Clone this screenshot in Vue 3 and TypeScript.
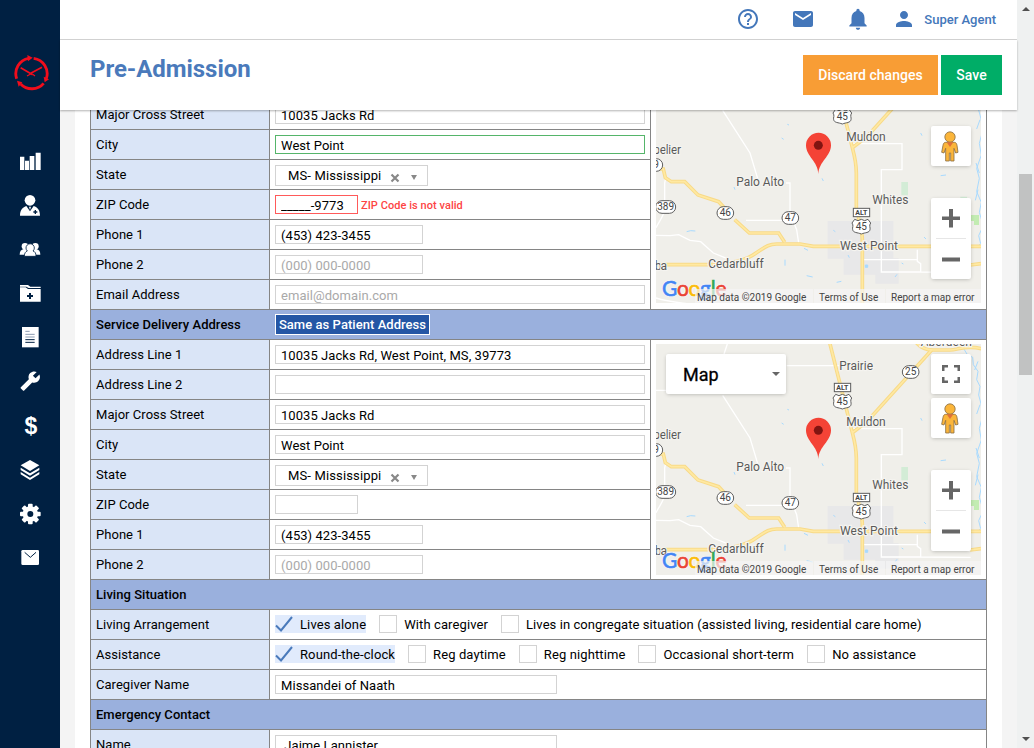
<script setup lang="ts">
interface Choice {
  text: string
  on?: boolean
  long?: boolean
}
interface Row {
  label: string
  kind: 'text' | 'select' | 'checks'
  value?: string
  hint?: string
  size?: 'full' | 'half' | 'phone' | 'zip'
  state?: 'valid' | 'invalid'
  error?: string
  choices?: Choice[]
}
interface Section {
  title?: string
  action?: string
  map?: 'partial' | 'whole'
  rows: Row[]
}

const sections: Section[] = [
  {
    map: 'partial',
    rows: [
      { label: 'Major Cross Street', kind: 'text', value: '10035 Jacks Rd', size: 'full' },
      { label: 'City', kind: 'text', value: 'West Point', size: 'full', state: 'valid' },
      { label: 'State', kind: 'select', value: 'MS- Mississippi' },
      { label: 'ZIP Code', kind: 'text', value: '_____-9773', size: 'zip', state: 'invalid', error: 'ZIP Code is not valid' },
      { label: 'Phone 1', kind: 'text', value: '(453) 423-3455', size: 'phone' },
      { label: 'Phone 2', kind: 'text', hint: '(000) 000-0000', size: 'phone' },
      { label: 'Email Address', kind: 'text', hint: 'email@domain.com', size: 'full' },
    ],
  },
  {
    title: 'Service Delivery Address',
    action: 'Same as Patient Address',
    map: 'whole',
    rows: [
      { label: 'Address Line 1', kind: 'text', value: '10035 Jacks Rd, West Point, MS, 39773', size: 'full' },
      { label: 'Address Line 2', kind: 'text', size: 'full' },
      { label: 'Major Cross Street', kind: 'text', value: '10035 Jacks Rd', size: 'full' },
      { label: 'City', kind: 'text', value: 'West Point', size: 'full' },
      { label: 'State', kind: 'select', value: 'MS- Mississippi' },
      { label: 'ZIP Code', kind: 'text', size: 'zip' },
      { label: 'Phone 1', kind: 'text', value: '(453) 423-3455', size: 'phone' },
      { label: 'Phone 2', kind: 'text', hint: '(000) 000-0000', size: 'phone' },
    ],
  },
  {
    title: 'Living Situation',
    rows: [
      {
        label: 'Living Arrangement',
        kind: 'checks',
        choices: [
          { text: 'Lives alone', on: true },
          { text: 'With caregiver' },
          { text: 'Lives in congregate situation (assisted living, residential care home)', long: true },
        ],
      },
      {
        label: 'Assistance',
        kind: 'checks',
        choices: [
          { text: 'Round-the-clock', on: true },
          { text: 'Reg daytime' },
          { text: 'Reg nighttime' },
          { text: 'Occasional short-term' },
          { text: 'No assistance' },
        ],
      },
      { label: 'Caregiver Name', kind: 'text', value: 'Missandei of Naath', size: 'half' },
    ],
  },
  {
    title: 'Emergency Contact',
    rows: [{ label: 'Name', kind: 'text', value: ' Jaime Lannister', size: 'half' }],
  },
]

// Map drawing units are a third of a pixel.
const viewBoxes = { partial: '18 141 975 609', whole: '18 18 975 693' }

const teeth = [0, 45, 90, 135, 180, 225, 270, 315]

const places = [
  { t: 'Prairie', x: 568, y: 97, w: 101 },
  { t: 'Muldon', x: 589, y: 265, w: 118 },
  { t: 'Palo Alto', x: 259, y: 400, w: 143 },
  { t: 'Whites', x: 667, y: 454, w: 108 },
  { t: 'West Point', x: 570, y: 592, w: 174 },
  { t: 'Cedarbluff', x: 175, y: 646, w: 166 },
  { t: 'pelier', x: 10, y: 304, w: 83 },
  { t: 'ba', x: 14, y: 652, w: 37 },
  { t: 'Aberdeen', x: 812, y: 24, w: 154 },
]
const ovals = [
  { t: '25', x: 782, y: 102, w: 50 },
  { t: '46', x: 226, y: 480, w: 50 },
  { t: '47', x: 421, y: 495, w: 50 },
  { t: '389', x: 47, y: 462, w: 60 },
  { t: '9', x: 18, y: 336, w: 40 },
]
const shields = [
  { x: 577, y: 190 },
  { x: 634, y: 520 },
]
</script>

<template>
  <div class="app">
    <aside class="side">
      <svg class="logo" viewBox="42 165 108 108" fill="none" stroke="#f10d1c">
        <g stroke-width="8.500">
          <path d="M101 175A46.500 46.500 0 0 1 139 236" />
          <path d="M131 250A46.500 46.500 0 0 1 62 252" />
          <path d="M50 236A46.500 46.500 0 0 1 86 175" />
        </g>
        <g fill="#f10d1c" stroke="none">
          <path d="M82 165l16 8-14 11z" />
          <path d="M147 238l-13 9-3-17z" />
          <path d="M51 242l16 5-11 13z" />
        </g>
        <path d="M62 203L98 224M126 202L88 222" stroke-width="5" />
        <path d="M98 223l7 5M92 222l-11 6" stroke-width="3.500" />
      </svg>
      <nav class="nav">
        <a><svg viewBox="0 0 66 66"><path d="M3 20h13v40H3zM18 32h12v28H18zM32 18h14v42H32zM50 8h15v52H50z" /></svg></a>
        <a>
          <svg viewBox="0 0 66 66">
            <circle cx="33" cy="19" r="16" />
            <path d="M3 65C3 47 12 40 22 36L33 52 44 36C56 40 63 48 63 65z" />
            <path d="M30 38h6l-3 10z" />
            <path class="cut" d="M47 48h4v4h4v4h-4v4h-4v-4h-4v-4h4z" />
          </svg>
        </a>
        <a>
          <svg viewBox="0 0 66 66">
            <circle cx="18" cy="25" r="10" /><circle cx="49" cy="25" r="10" />
            <path d="M2 50c0-10 4-15 12-17h38c8 2 12 7 12 17z" />
            <path class="cutline" d="M16 55c0-10 4-14 9-16a12.500 12.500 0 1 1 17 0c6 2 9 6 9 16z" />
          </svg>
        </a>
        <a class="low">
          <svg viewBox="0 0 66 66">
            <path d="M3 6h24l7 5h31v4H29l-7-4H3zM3 13h17l7 5h38v38H3z" />
            <path class="cut" d="M30 30h6v6h6v6h-6v6h-6v-6h-6v-6h6z" />
          </svg>
        </a>
        <a>
          <svg viewBox="0 0 66 66">
            <path d="M9 3h50v61H9z" />
            <path d="M19 16h13M19 25h28M19 33h28" stroke="#8c9bb0" stroke-width="3" />
            <path d="M19 41h28M19 49h28" stroke="#002042" stroke-width="3" />
          </svg>
        </a>
        <a>
          <svg viewBox="-.5 -.5 25 25">
            <path transform="matrix(-1 0 0 1 24.3 0)" d="M22.700 19l-9.100-9.100c.9-2.300.4-5-1.500-6.900-2-2-5-2.400-7.400-1.300L9 6 6 9 1.600 4.700C.4 7.100.9 10.100 2.900 12.100c1.900 1.900 4.600 2.400 6.900 1.500l9.100 9.100c.4.4 1 .4 1.400 0l2.300-2.300c.5-.4.5-1.100.1-1.400z" />
          </svg>
        </a>
        <a class="low"><span class="dollar">$</span></a>
        <a class="low">
          <svg viewBox="0 0 66 66">
            <path d="M33 3L61 19 33 36 5 19z" />
            <path d="M5 26L33 43 61 26v7L33 50 5 33z" />
            <path d="M5 39L33 56 61 39v7L33 63 5 46z" />
          </svg>
        </a>
        <a class="low">
          <svg viewBox="0 0 66 66">
            <circle cx="34" cy="33" r="23" />
            <rect v-for="a in teeth" :key="a" x="27" y="2" width="14" height="14" rx="3" :transform="`rotate(${a} 34 33)`" />
            <circle class="cut" cx="34" cy="33" r="9" />
          </svg>
        </a>
        <a>
          <svg viewBox="0 0 66 66">
            <rect x="7" y="12" width="53" height="45" rx="4" />
            <path d="M17 19L34 34 51 19" fill="none" stroke="#002042" stroke-width="3" />
          </svg>
        </a>
      </nav>
    </aside>

    <div class="page">
      <header class="topbar">
        <svg class="ico help" viewBox="0 0 24 24"><path d="M11 18h2v-2h-2v2zm1-16C6.480 2 2 6.480 2 12s4.480 10 10 10 10-4.480 10-10S17.520 2 12 2zm0 18c-4.410 0-8-3.590-8-8s3.590-8 8-8 8 3.590 8 8-3.590 8-8 8zm0-14c-2.210 0-4 1.790-4 4h2c0-1.100.9-2 2-2s2 .9 2 2c0 2-3 1.750-3 5h2c0-2.250 3-2.500 3-5 0-2.210-1.790-4-4-4z" /></svg>
        <svg class="ico mail" viewBox="0 0 24 24"><path d="M20 4H4c-1.100 0-2 .9-2 2v12c0 1.100.9 2 2 2h16c1.100 0 2-.9 2-2V6c0-1.100-.9-2-2-2zm0 4l-8 5-8-5V6l8 5 8-5v2z" /></svg>
        <svg class="ico bell" viewBox="0 0 24 24"><path d="M12 22c1.100 0 2-.9 2-2h-4c0 1.100.89 2 2 2zm6-6v-5c0-3.070-1.640-5.640-4.500-6.320V4c0-.83-.67-1.500-1.500-1.500s-1.500.67-1.500 1.500v.68C7.630 5.360 6 7.920 6 11v5l-2 2v1h16v-1l-2-2z" /></svg>
        <svg class="ico user" viewBox="0 0 24 24"><path d="M12 12c2.210 0 4-1.790 4-4s-1.790-4-4-4-4 1.790-4 4 1.790 4 4 4zm0 2c-2.670 0-8 1.340-8 4v2h16v-2c0-2.660-5.330-4-8-4z" /></svg>
        <span class="agent">Super Agent</span>
      </header>
      <div class="titlebar">
        <h1>Pre-Admission</h1>
        <button class="btn discard">Discard changes</button>
        <button class="btn save">Save</button>
      </div>

      <div class="body">
        <main class="panel">
          <section v-for="(s, i) in sections" :key="i">
            <div v-if="s.title" class="head">
              <span class="head-title">{{ s.title }}</span>
              <button v-if="s.action" class="same">{{ s.action }}</button>
            </div>
            <div class="group">
              <div class="rows">
                <div v-for="(r, j) in s.rows" :key="j" class="row">
                  <div class="label">{{ r.label }}</div>
                  <div class="field">
                    <template v-if="r.kind === 'text'">
                      <input type="text" class="input" :class="[r.size, r.state]" :value="r.value" :placeholder="r.hint" />
                      <span v-if="r.error" class="error">{{ r.error }}</span>
                    </template>
                    <div v-else-if="r.kind === 'select'" class="select">
                      <span>{{ r.value }}</span>
                      <svg class="x" viewBox="0 0 10 10"><path d="M1.500 1.500l7 7M8.500 1.500l-7 7" /></svg>
                      <i class="caret"></i>
                    </div>
                    <template v-else>
                      <label v-for="c in r.choices" :key="c.text" class="check" :class="{ on: c.on, long: c.long }">
                        <svg v-if="c.on" viewBox="0 0 18 18"><path d="M1 10.500l5 5L17 2" /></svg>
                        <i v-else class="box"></i>
                        <span>{{ c.text }}</span>
                      </label>
                    </template>
                  </div>
                </div>
              </div>
              <div v-if="s.map" class="mapcell" :class="s.map">
                <div class="map">
                  <svg class="canvas" :viewBox="viewBoxes[s.map]">
                    <rect x="0" y="0" width="1010" height="760" fill="#f0efea" />
                    <path d="M533 504h197v112h16v76h-70v-27h-95v-48h-48z" fill="#e8e8e9" />
                    <path d="M754 387h20v40h-20zM931 431h20v8h-20z" fill="#d3ecd6" />
                    <path d="M963 486h24v30h-15v-12h-9z" fill="#c3ecb2" />
                    <g class="water">
                      <path d="M940 30l12 20 16 8 2 22 14 20-4 25 10 20-4 26 8 30 2 40-8 30 6 35-14 40 8 30-8 40 14 32-6 30 12 40-14 30 6 24-12 12" />
                      <path d="M984 70l-10 26M990 200l-10 28M978 330l10 30M984 410l-8 32" />
                      <path d="M395 255l6 4M412 214l5 2M516 376l4 8M252 402l3 8M812 240l4 8M872 368l16-2M110 536l12-3 14 1M405 620v18M594 606l4 8M550 532l6 4M735 672l6-8M560 688l14-3M470 668l18 4M755 630l5 3M822 552l6 6M622 490l5 6M462 586l12 6" />
                      <path d="M646 636h7v7h-7z" fill="#a8daff" />
                    </g>
                    <g class="minor">
                      <path d="M232 18L222 48 M218 172L300 300 324 380 M410 83H568 M18 157H50 M610 272H756V350H694V657H812 M408 390H420V480L440 530 446 570 M288 502H400 M640 620H802V625L812 632V657L962 658 M18 547L60 548 86 545 120 562 152 566 190 600 230 616 M18 524C30 500 40 492 44 470V390L48 370 M18 735C50 745 80 748 110 752 M802 620V590" />
                    </g>
                    <g v-for="k in ['casing', 'road']" :key="k" :class="k">
                      <path d="M18 348H40L46 374 64 386H104L144 426 206 446 224 466 M254 500L298 540H386L404 568" />
                      <path d="M18 635H180C230 635 290 622 318 600 350 578 360 573 380 573H450L490 580H993" />
                      <path d="M538 10L607 284C614 310 619 330 619 360V465C626 500 637 530 637 560V760M607 284L650 252 845 36" />
                      <path d="M800 15C815 32 830 36 850 36H900C925 36 945 20 995 32M960 636L993 632" />
                    </g>
                    <g v-for="o in ovals" :key="o.t">
                      <rect class="oval" :x="o.x - o.w / 2" :y="o.y - 19" :width="o.w" height="38" rx="19" />
                      <text class="num" :x="o.x" :y="o.y + 10">{{ o.t }}</text>
                    </g>
                    <g v-for="h in shields" :key="h.x" :transform="`translate(${h.x} ${h.y})`">
                      <rect class="alt" x="-24" y="-54" width="49" height="25" />
                      <text class="altnum" x="0" y="-34">ALT</text>
                      <path class="oval" d="M-20-21L-10-17 0-21 10-17 20-21 28-10C22-2 28 4 26 10 24 20 12 18 0 23-12 18-24 20-26 10-28 4-22-2-28-10z" />
                      <text class="num" x="0" y="12">45</text>
                    </g>
                    <text v-for="p in places" :key="p.t" class="place" :x="p.x" :y="p.y" :textLength="p.w">{{ p.t }}</text>
                    <path d="M505 363C504 325 468 310 468 277A37.500 37.500 0 0 1 543 277C543 310 507 325 505 363z" fill="#f44336" />
                    <circle cx="505" cy="277" r="13.500" fill="#811411" />
                  </svg>
                  <div class="google"><b>G</b><i>o</i><u>o</u><b>g</b><s>l</s><i>e</i></div>
                  <div class="credits">
                    <span class="c1">Map data ©2019 Google</span><span class="c2">Terms of Use</span><span class="c3">Report a map error</span>
                  </div>
                  <div v-if="s.map === 'whole'" class="maptype">Map<i></i></div>
                  <div v-if="s.map === 'whole'" class="ctl full-screen">
                    <svg viewBox="0 0 18 18"><path d="M0 0h6v2.500H2.500V6H0zM12 0h6v6h-2.500V2.500H12zM0 12h2.500v3.500H6V18H0zM15.500 12H18v6h-6v-2.500h3.500z" /></svg>
                  </div>
                  <div class="ctl pegman">
                    <svg viewBox="0 0 54 93">
                      <g fill="#fbb53a" stroke="#8b7044" stroke-width="2.500">
                        <path d="M14 34h26c5 0 7 4 8 9l3 21-7 2-5-14v38H29V66h-4v24H14V52L9 66l-7-2 4-21c1-5 3-9 8-9z" />
                        <circle cx="27" cy="18" r="15.500" />
                      </g>
                      <path d="M17 34h20L27 48z" fill="#e0703a" />
                    </svg>
                  </div>
                  <div class="zoomer">
                    <svg viewBox="0 0 40 81">
                      <path d="M11 18.500h7v-7.500h4v7.500h7v3.500h-7v7.500h-4V22H11zM11 59.500h18V63.500H11z" fill="#666" />
                      <path d="M5 40.500h30" stroke="#e6e6e6" />
                    </svg>
                  </div>
                </div>
              </div>
            </div>
          </section>
        </main>
      </div>
    </div>

    <div class="scrollbar">
      <i class="up"></i>
      <i class="thumb"></i>
      <i class="down"></i>
    </div>
  </div>
</template>

<style>
body {
  margin: 0;
  overflow: hidden;
}
</style>

<style scoped>
.app {
  display: flex;
  width: 1034px;
  height: 748px;
  overflow: hidden;
  background: #f4f4f4;
  font: 13px/1 Roboto, "Liberation Sans", sans-serif;
  color: #000;
}
.side {
  width: 60px;
  flex: none;
  background: #002042;
  box-sizing: border-box;
  padding-top: 55px;
}
.logo {
  display: block;
  width: 36px;
  height: 36px;
  margin: 0 0 48px 14px;
}
.nav {
  display: flex;
  flex-direction: column;
}
.nav a {
  height: 44px;
  box-sizing: border-box;
  display: flex;
  align-items: center;
  justify-content: center;
  color: #fff;
}
.nav .low {
  padding-top: 2px;
}
.nav svg {
  width: 22px;
  height: 22px;
  fill: #fff;
}
.nav .cut {
  fill: #002042;
}
.nav .cutline {
  stroke: #002042;
  stroke-width: 2.5;
}
.dollar {
  font: bold 23px/24px "Liberation Sans", Arial, sans-serif;
  padding-left: 2px;
}
.page {
  flex: 1;
  display: flex;
  flex-direction: column;
  min-width: 0;
}
.topbar {
  height: 39px;
  flex: none;
  display: flex;
  align-items: center;
  justify-content: flex-end;
  padding-right: 21px;
  background: #fff;
  border-bottom: 1px solid #d6d6d6;
}
.ico {
  width: 24px;
  height: 24px;
  margin-top: -1px;
  fill: #4477ba;
}
.help {
  margin-right: 31px;
}
.mail {
  margin-right: 30px;
}
.bell {
  width: 26px;
  height: 26px;
  margin-right: 21px;
}
.user {
  margin-right: 8px;
}
.agent {
  font-weight: 500;
  color: #4477ba;
}
.titlebar {
  position: relative;
  z-index: 1;
  height: 70px;
  flex: none;
  display: flex;
  align-items: center;
  gap: 3px;
  padding: 0 15px 0 30px;
  background: #fff;
  box-shadow: 0 1px 2px rgba(0, 0, 0, 0.3);
}
h1 {
  flex: 1;
  margin: 0 0 12px;
  font-size: 24px;
  line-height: 28px;
  font-weight: 700;
  letter-spacing: -0.05px;
  color: #4a7abb;
}
.btn {
  height: 40px;
  border: 0;
  padding: 0;
  font: 500 14px/40px Roboto, "Liberation Sans", sans-serif;
  letter-spacing: 0.03px;
  color: #fff;
}
.discard {
  width: 135px;
  background: #f89d35;
}
.save {
  width: 61px;
  background: #00ad67;
}
.body {
  flex: 1;
  min-height: 0;
  overflow: hidden;
  padding: 0 15px;
}
.panel {
  background: #fff;
  padding: 0 15px;
  margin-top: -10px;
}
section {
  border: solid #858585;
  border-width: 0 1px;
}
.head {
  height: 29px;
  display: flex;
  align-items: center;
  background: #9ab0dd;
  border-bottom: 1px solid #858585;
  font-weight: 500;
}
.head-title {
  width: 179px;
  padding-left: 5px;
  box-sizing: border-box;
  letter-spacing: 0.03px;
}
.same {
  width: 155px;
  height: 21px;
  margin-left: 5px;
  padding: 0;
  border: 1px solid #fff;
  background: #2456a5;
  color: #fff;
  font: 500 13px/19px Roboto, "Liberation Sans", sans-serif;
  letter-spacing: 0.05px;
}
.group {
  display: flex;
}
.rows {
  flex: 1;
}
.row {
  display: flex;
  height: 29px;
  border-bottom: 1px solid #858585;
}
.label {
  width: 179px;
  flex: none;
  box-sizing: border-box;
  padding-left: 5px;
  line-height: 29px;
  letter-spacing: 0.04px;
  background: #dae5f7;
  border-right: 1px solid #858585;
}
.field {
  flex: 1;
  display: flex;
  align-items: flex-start;
  padding: 5px 5px 0;
}
.input {
  box-sizing: border-box;
  height: 19px;
  margin: 0;
  border: 1px solid #d3d3d3;
  padding: 2px 0 0 5px;
  font: 13px/16px Roboto, "Liberation Sans", sans-serif;
  letter-spacing: 0.06px;
  color: #000;
  background: #fff;
  outline: 0;
  border-radius: 0;
}
.input::placeholder {
  color: #a9a9a9;
  opacity: 1;
}
.full {
  width: 370px;
}
.half {
  width: 282px;
}
.phone {
  width: 148px;
}
.zip {
  width: 83px;
}
.valid {
  border-color: #55b56a;
}
.invalid {
  border-color: #ff5a5a;
}
.error {
  margin: 0 0 0 3px;
  font-size: 11px;
  line-height: 22px;
  font-weight: 500;
  letter-spacing: 0.05px;
  color: #fd4444;
}
.select {
  box-sizing: border-box;
  width: 153px;
  height: 21px;
  border: 1px solid #d3d3d3;
  padding-left: 12px;
  display: flex;
  align-items: center;
}
.select span {
  width: 102px;
  line-height: 19px;
  letter-spacing: 0.14px;
}
.x {
  width: 10px;
  height: 10px;
  margin-top: 4px;
  stroke: #888;
  stroke-width: 2.2;
}
.caret {
  margin: 4px 0 0 11px;
  border: solid transparent;
  border-width: 5px 3.5px 0;
  border-top-color: #888;
}
.check {
  display: flex;
  align-items: center;
  height: 18px;
  margin-right: 13px;
  letter-spacing: 0.11px;
}
.check.long {
  letter-spacing: 0.07px;
}
.check.on {
  background: #e1ebfc;
}
.check svg,
.box {
  width: 18px;
  height: 18px;
  box-sizing: border-box;
  margin-right: 7px;
}
.check svg {
  fill: none;
  stroke: #4a7abb;
  stroke-width: 2;
}
.box {
  border: 1px solid #d3d3d3;
  background: #fff;
}
.mapcell {
  width: 336px;
  box-sizing: border-box;
  border: solid #858585;
  border-width: 0 0 1px 1px;
}
.whole {
  padding: 4px 5px;
}
.partial {
  padding: 0 5px;
}
.map {
  position: relative;
  overflow: hidden;
  width: 325px;
  height: 231px;
}
.partial .map {
  height: 203px;
}
.canvas {
  display: block;
  width: 325px;
  height: 100%;
}
.water {
  fill: none;
  stroke: #a8daff;
  stroke-width: 3;
}
.minor {
  fill: none;
  stroke: #fff;
  stroke-width: 4;
}
.casing {
  fill: none;
  stroke: #f8da88;
  stroke-width: 11;
}
.road {
  fill: none;
  stroke: #ffe9a2;
  stroke-width: 5;
}
.oval {
  fill: #fff;
  stroke: #5d5d5d;
  stroke-width: 3;
}
.alt {
  fill: #fff;
  stroke: #5d5d5d;
  stroke-width: 3;
}
.num {
  font-size: 30px;
  fill: #444;
  text-anchor: middle;
}
.altnum {
  font-size: 21px;
  font-weight: 700;
  fill: #444;
  text-anchor: middle;
}
.place {
  font-size: 36px;
  fill: #5a5a5a;
  stroke: #f5f4f0;
  stroke-width: 7;
  paint-order: stroke;
}
.google {
  position: absolute;
  left: 6px;
  bottom: 2px;
  height: 26px;
  font: 21px/26px Lato, "Liberation Sans", sans-serif;
  letter-spacing: -0.3px;
  text-shadow: 0 0 2px #fff, 0 0 2px #fff;
}
.google b,
.google i,
.google u,
.google s {
  font-style: normal;
  font-weight: 400;
  text-decoration: none;
  -webkit-text-stroke: 0.6px currentColor;
}
.google b {
  color: #4285f4;
}
.google i {
  color: #ea4335;
}
.google u {
  color: #fbbc05;
}
.google s {
  color: #34a853;
}
.credits {
  position: absolute;
  right: 0;
  bottom: 0;
  display: flex;
  gap: 1px;
  height: 14px;
  font-size: 10px;
  line-height: 17px;
  color: #444;
  white-space: nowrap;
}
.credits span {
  box-sizing: border-box;
  padding-left: 5px;
  background: rgba(245, 245, 245, 0.7);
}
.credits .c1 {
  width: 118px;
  padding-left: 2px;
  letter-spacing: 0.02px;
}
.c2 {
  width: 71px;
}
.c3 {
  width: 95px;
}
.maptype,
.ctl,
.zoomer {
  position: absolute;
  right: 10px;
  width: 40px;
  height: 40px;
  background: #fff;
  border-radius: 2px;
  box-shadow: 0 1px 4px -1px rgba(0, 0, 0, 0.3);
}
.maptype {
  left: 10px;
  top: 10px;
  width: 120px;
  box-sizing: border-box;
  padding-left: 17px;
  font-size: 18px;
  line-height: 42px;
  -webkit-text-stroke: 0.3px #000;
}
.maptype i {
  position: absolute;
  right: 6px;
  top: 18px;
  border: solid transparent;
  border-width: 4px 4px 0;
  border-top-color: #666;
}
.ctl {
  display: flex;
  align-items: center;
  justify-content: center;
}
.full-screen {
  top: 10px;
}
.full-screen svg {
  width: 18px;
  height: 18px;
  fill: #666;
}
.pegman {
  bottom: 137px;
}
.pegman svg {
  width: 18px;
  height: 31px;
  margin-right: 2px;
}
.zoomer {
  bottom: 24px;
  height: 81px;
}
.zoomer svg {
  display: block;
  width: 40px;
  height: 81px;
}
.scrollbar {
  width: 17px;
  flex: none;
  background: #eff1f1;
  display: flex;
  flex-direction: column;
  align-items: center;
}
.up {
  margin: 7px 0 163px;
  border: solid transparent;
  border-width: 0 4px 4px;
  border-bottom-color: #505050;
}
.thumb {
  width: 13px;
  height: 201px;
  background: #c1c2c2;
}
.down {
  margin: auto 0 7px;
  border: solid transparent;
  border-width: 4px 4px 0;
  border-top-color: #505050;
}
</style>
